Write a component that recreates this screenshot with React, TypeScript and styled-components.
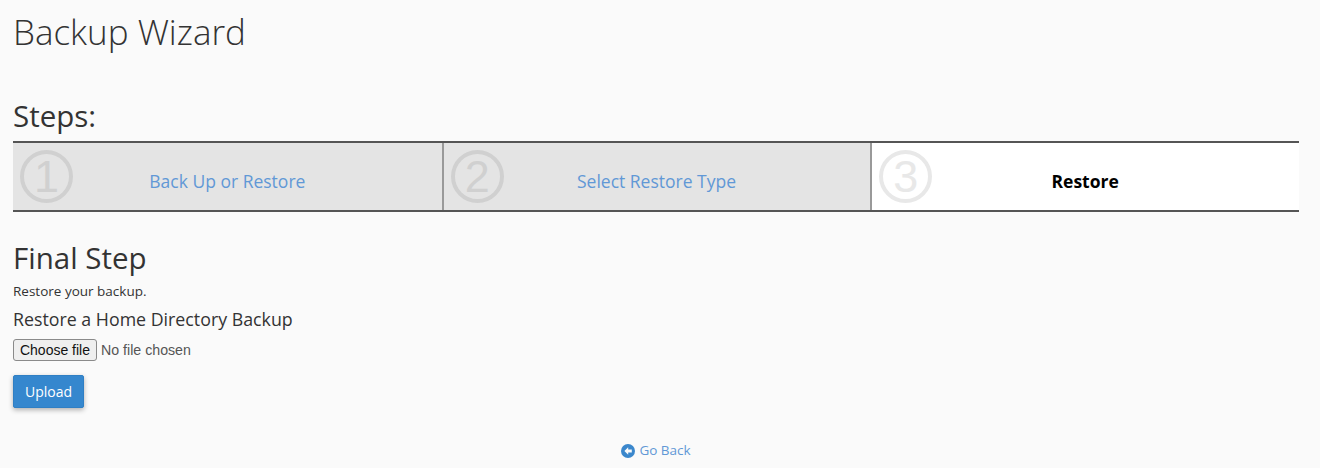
import React from 'react';
import styled, { createGlobalStyle } from 'styled-components';

const GlobalStyle = createGlobalStyle`
  html, body {
    margin: 0;
    padding: 0;
    background: #fafafa;
  }
  body {
    font-family: "Open Sans", "Liberation Sans", sans-serif;
    color: #333;
    overflow: hidden;
  }
`;

const Page = styled.div`
  width: 1286px;
  height: 468px;
  padding: 0 21px 0 13px;
  box-sizing: content-box;
  display: flex;
  flex-direction: column;
`;

const Title = styled.h1`
  margin: 10px 0 0;
  font-size: 35px;
  line-height: 44px;
  font-weight: 300;
`;

const StepsHeading = styled.h2`
  margin: 45px 0 0;
  font-size: 29.5px;
  line-height: 34px;
  font-weight: 400;
`;

const StepList = styled.div`
  margin-top: 8px;
  display: grid;
  grid-template-columns: repeat(3, 1fr);
  height: 71px;
  box-sizing: border-box;
  border-top: 2px solid #555;
  border-bottom: 2px solid #555;
`;

const Step = styled.div<{ $active?: boolean }>`
  display: grid;
  grid-template-columns: 1fr auto 1fr;
  align-items: center;
  padding: 0 7px;
  box-sizing: border-box;
  background: ${(p) => (p.$active ? '#fff' : '#e4e4e4')};

  & + & {
    border-left: 2px solid #999;
    padding-right: 8px;
  }
`;

const StepNumber = styled.div<{ $active?: boolean }>`
  width: 53px;
  height: 53px;
  box-sizing: border-box;
  border: 4px solid ${(p) => (p.$active ? '#e8e8e8' : '#d0d0d0')};
  border-radius: 50%;
  display: flex;
  align-items: center;
  justify-content: center;
  justify-self: start;
  font-family: "Liberation Sans", sans-serif;
  font-size: 45px;
  line-height: 1;
  color: ${(p) => (p.$active ? '#e8e8e8' : '#d0d0d0')};
`;

const StepLink = styled.a`
  padding-top: 9px;
  font-size: 17.5px;
  line-height: 20px;
  color: #6198d6;
  text-decoration: none;
`;

const StepCurrent = styled.span`
  padding-top: 9px;
  font-size: 17.5px;
  line-height: 20px;
  font-weight: 700;
  color: #000;
`;

const FinalHeading = styled.h2`
  margin: 29px 0 0;
  font-size: 29.5px;
  line-height: 34px;
  font-weight: 500;
`;

const Description = styled.p`
  margin: 8px 0 0;
  font-size: 13.5px;
  line-height: 17px;
`;

const SubHeading = styled.h3`
  margin: 8px 0 0;
  font-size: 17.8px;
  line-height: 22px;
  font-weight: 500;
`;

const FileRow = styled.div`
  margin-top: 9px;
  display: flex;
  align-items: center;
  gap: 4px;
`;

const FileButton = styled.button`
  width: 84px;
  height: 22px;
  padding: 0;
  box-sizing: border-box;
  border: 1px solid #8a8a8a;
  border-radius: 3px;
  background: #efefef;
  font-family: "Liberation Sans", Arial, sans-serif;
  font-size: 14px;
  color: #111;
`;

const FileStatus = styled.span`
  font-family: "Liberation Sans", Arial, sans-serif;
  font-size: 14.2px;
  color: #555;
`;

const UploadButton = styled.button`
  margin-top: 14px;
  align-self: flex-start;
  width: 71px;
  height: 33px;
  padding: 0;
  border: 1px solid #2f7fc4;
  border-radius: 2px;
  background: #3587ce;
  box-shadow: 0 2px 5px rgba(0, 0, 0, 0.3);
  font-family: "Open Sans", sans-serif;
  font-size: 14px;
  color: #fff;
`;

const BackLink = styled.a`
  margin-top: 33px;
  align-self: center;
  display: flex;
  align-items: center;
  gap: 4px;
  font-size: 13.5px;
  line-height: 19px;
  color: #6198d6;
  text-decoration: none;
`;

const BackIcon = () => (
  <svg width="14" height="14" viewBox="0 0 14 14" aria-hidden="true">
    <circle cx="7" cy="7" r="7" fill="#3b87cc" />
    <path d="M7.2 3.2 3.4 7l3.8 3.8V8.5h3.6v-3H7.2z" fill="#fafafa" />
  </svg>
);

export default function App() {
  return (
    <Page>
      <GlobalStyle />
      <Title>Backup Wizard</Title>
      <StepsHeading>Steps:</StepsHeading>
      <StepList>
        <Step>
          <StepNumber>1</StepNumber>
          <StepLink href="#">Back Up or Restore</StepLink>
        </Step>
        <Step>
          <StepNumber>2</StepNumber>
          <StepLink href="#">Select Restore Type</StepLink>
        </Step>
        <Step $active>
          <StepNumber $active>3</StepNumber>
          <StepCurrent>Restore</StepCurrent>
        </Step>
      </StepList>
      <FinalHeading>Final Step</FinalHeading>
      <Description>Restore your backup.</Description>
      <SubHeading>Restore a Home Directory Backup</SubHeading>
      <FileRow>
        <FileButton type="button">Choose file</FileButton>
        <FileStatus>No file chosen</FileStatus>
      </FileRow>
      <UploadButton type="button">Upload</UploadButton>
      <BackLink href="#">
        <BackIcon />
        Go Back
      </BackLink>
    </Page>
  );
}
